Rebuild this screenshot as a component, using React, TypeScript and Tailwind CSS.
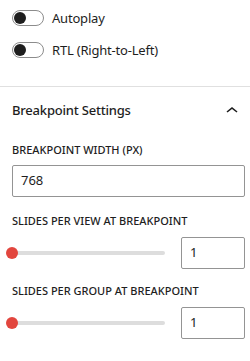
import React from "react";

function Toggle({ label }: { label: string }) {
  return (
    <div className="flex items-center h-4">
      <div className="relative w-[32px] h-[16px] rounded-full border border-[#8c8c8c] bg-white">
        <div className="absolute left-[1px] top-[1px] w-[12px] h-[12px] rounded-full bg-[#1e1e1e]" />
      </div>
      <span className="ml-[8px] text-[13px] leading-4 tracking-[-0.2px] text-[#1e1e1e]">{label}</span>
    </div>
  );
}

function Label({ children }: { children: React.ReactNode }) {
  return (
    <div className="text-[11px] leading-4 font-medium uppercase text-[#1e1e1e]">{children}</div>
  );
}

function SliderRow({ value }: { value: string }) {
  return (
    <div className="flex items-center h-[32px]">
      <div className="relative flex-1 h-[4px] ml-0 mr-[16px]">
        <div className="absolute left-[12px] right-0 top-0 h-[4px] rounded-full bg-[#dddddd]" />
        <div className="absolute left-[6px] top-[-4px] w-[12px] h-[12px] rounded-full bg-[#e2463e]" />
      </div>
      <div className="w-[64px] h-[32px] border border-[#949494] rounded-[2px] flex items-center px-[8px] text-[13px] text-[#1e1e1e]">
        {value}
      </div>
    </div>
  );
}

export default function App() {
  return (
    <div
      className="w-[250px] h-[361px] bg-white overflow-hidden"
      style={{ fontFamily: '"Noto Sans", "Liberation Sans", sans-serif' }}
    >
      <div className="pl-[12px] pt-[10px] pb-[28px] flex flex-col gap-[16px]">
        <Toggle label="Autoplay" />
        <Toggle label="RTL (Right-to-Left)" />
      </div>
      <div className="border-t border-[#e0e0e0]">
        <div className="h-[48px] flex items-center justify-between pl-[12px] pr-[6px]">
          <span className="text-[13px] font-medium tracking-[-0.2px] text-[#1e1e1e]">Breakpoint Settings</span>
          <svg width="24" height="24" viewBox="0 0 24 24" className="text-[#1e1e1e]">
            <path d="M6.5 12.4L12 8l5.5 4.4-.9 1.2L12 10l-4.5 3.6-1-1.2z" fill="currentColor" />
          </svg>
        </div>
        <div className="pl-[12px] pr-[5px]">
          <div className="mt-[7px]">
            <Label>Breakpoint width (px)</Label>
          </div>
          <div className="mt-[7px] h-[32px] border border-[#949494] rounded-[2px] flex items-center px-[8px] text-[13px] text-[#1e1e1e]">
            768
          </div>
          <div className="mt-[16px] mb-[8px]">
            <Label>Slides per view at breakpoint</Label>
          </div>
        </div>
        <div className="pr-[5px]">
          <SliderRow value="1" />
        </div>
        <div className="pl-[12px] pr-[5px] mt-[14px] mb-[8px]">
          <Label>Slides per group at breakpoint</Label>
        </div>
        <div className="pr-[5px]">
          <SliderRow value="1" />
        </div>
      </div>
    </div>
  );
}
